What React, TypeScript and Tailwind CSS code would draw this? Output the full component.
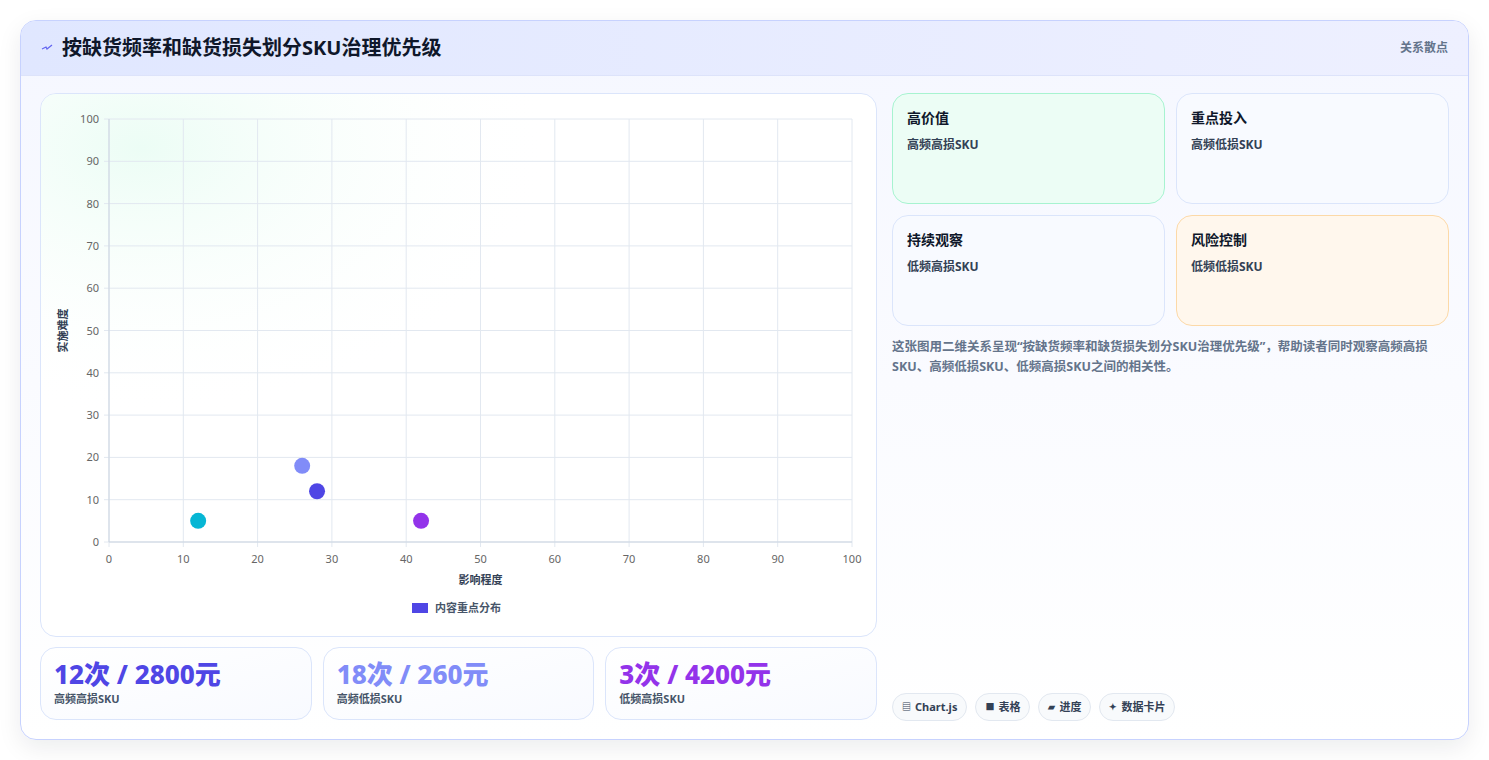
import React from "react";

const F = { fontFamily: '"Noto Sans", "Noto Sans CJK SC", sans-serif' };

function Chart() {
  const W = 836, H = 543;
  const x0 = 68, y0 = 25, pw = 743, ph = 423;
  const X = (v: number) => x0 + (v / 100) * pw;
  const Y = (v: number) => y0 + ph - (v / 100) * ph;
  const ticks = [0, 10, 20, 30, 40, 50, 60, 70, 80, 90, 100];
  const pts = [
    { x: 12, y: 5, c: "#06b6d4" },
    { x: 26, y: 18, c: "#818cf8" },
    { x: 28, y: 12, c: "#4f46e5" },
    { x: 42, y: 5, c: "#9333ea" },
  ];
  return (
    <svg width={W} height={H} className="block" style={F}>
      <defs>
        <radialGradient id="g" cx="0.12" cy="0.1" r="0.5">
          <stop offset="0" stopColor="#ecfdf5" />
          <stop offset="1" stopColor="#ffffff" stopOpacity="0" />
        </radialGradient>
      </defs>
      <rect x={0} y={0} width={W} height={H} fill="url(#g)" />
      {ticks.map((t) => (
        <g key={t}>
          <line x1={X(t)} x2={X(t)} y1={y0} y2={y0 + ph + 5} stroke="#e2e8f0" />
          <line x1={x0 - 5} x2={x0 + pw} y1={Y(t)} y2={Y(t)} stroke="#e2e8f0" />
          <text x={x0 - 10} y={Y(t) + 4} fontSize={11} fill="#666" textAnchor="end">{t}</text>
          <text x={X(t)} y={y0 + ph + 21} fontSize={11} fill="#666" textAnchor="middle">{t}</text>
        </g>
      ))}
      <line x1={x0} x2={x0 + pw} y1={Y(0)} y2={Y(0)} stroke="#cbd5e1" />
      <line x1={x0} x2={x0} y1={y0} y2={y0 + ph} stroke="#cbd5e1" />
      <text x={0} y={0} fontSize={11} fontWeight={700} fill="#334155" textAnchor="middle" transform={`translate(26 ${y0 + ph / 2}) rotate(-90)`}>实施难度</text>
      <text x={x0 + pw / 2} y={490} fontSize={11} fontWeight={700} fill="#334155" textAnchor="middle">影响程度</text>
      <rect x={371} y={509} width={16} height={10} fill="#4f46e5" />
      <text x={394} y={518} fontSize={11} fontWeight={700} fill="#475569">内容重点分布</text>
      {pts.map((p, i) => (
        <circle key={i} cx={X(p.x)} cy={Y(p.y)} r={8} fill={p.c} />
      ))}
    </svg>
  );
}

function Quad({ t, s, cls }: { t: string; s: string; cls: string }) {
  return (
    <div className={`h-[111px] rounded-2xl border px-[14px] py-[13px] ${cls}`}>
      <div className="text-[14px] font-bold text-[#0f172a]">{t}</div>
      <div className="mt-[8px] text-[12px] font-bold text-[#334155]">{s}</div>
    </div>
  );
}

function Stat({ v, c, s }: { v: string; c: string; s: string }) {
  return (
    <div className="flex-1 h-[73px] rounded-2xl border border-[#dbe5fb] bg-gradient-to-br from-white to-[#f8faff] px-[13px] pt-[10px]">
      <div className={`text-[26px] font-extrabold leading-[32px] ${c}`}>{v}</div>
      <div className="text-[11px] font-bold text-[#475569] mt-[1px]">{s}</div>
    </div>
  );
}

function Chip({ i, t }: { i: string; t: string }) {
  return (
    <div className="h-[28px] px-[9px] rounded-full border border-[#e2e8f0] bg-[#f8fafc] flex items-center gap-1 text-[11px] font-bold text-[#334155]">
      <span className="text-[9px]">{i}</span>{t}
    </div>
  );
}

export default function App() {
  return (
    <div className="w-[1489px] h-[760px] bg-white pt-[20px] px-[20px]" style={F}>
      <div className="w-[1449px] h-[720px] rounded-[16px] border border-[#c7d2fe] bg-gradient-to-b from-[#f5f7ff] to-white shadow-[0_8px_24px_rgba(15,23,42,0.08)] overflow-hidden flex flex-col">
        <div className="h-[55px] shrink-0 flex items-center justify-between px-[20px] bg-gradient-to-r from-[#e0e7ff] to-[#eef0ff] border-b border-[#dde3fa]">
          <div className="flex items-center gap-[9px]">
            <svg width="12" height="12" viewBox="0 0 12 12"><path d="M1 7 L5 5 L6 7 L11 3" stroke="#6366f1" strokeWidth="1.3" fill="none" /></svg>
            <span className="text-[20px] font-bold text-[#0f172a]">按缺货频率和缺货损失划分SKU治理优先级</span>
          </div>
          <span className="text-[12px] font-semibold text-[#64748b]">关系散点</span>
        </div>
        <div className="flex-1 flex gap-[15px] px-[19px] pt-[17px] pb-[18px]">
          <div className="w-[837px] flex flex-col gap-[10px]">
            <div className="h-[544px] rounded-2xl border border-[#dbe5fb] bg-white overflow-hidden">
              <Chart />
            </div>
            <div className="flex gap-[11px]">
              <Stat v="12次 / 2800元" c="text-[#4f46e5]" s="高频高损SKU" />
              <Stat v="18次 / 260元" c="text-[#818cf8]" s="高频低损SKU" />
              <Stat v="3次 / 4200元" c="text-[#9333ea]" s="低频高损SKU" />
            </div>
          </div>
          <div className="flex-1 flex flex-col">
            <div className="grid grid-cols-2 gap-[11px]">
              <Quad t="高价值" s="高频高损SKU" cls="border-[#a7f3d0] bg-[#ecfdf5]" />
              <Quad t="重点投入" s="高频低损SKU" cls="border-[#dbe5fb] bg-[#f8faff]" />
              <Quad t="持续观察" s="低频高损SKU" cls="border-[#dbe5fb] bg-[#f8faff]" />
              <Quad t="风险控制" s="低频低损SKU" cls="border-[#fcd9a8] bg-[#fff7ed]" />
            </div>
            <p className="mt-[11px] text-[12.5px] font-bold leading-[20px] text-[#64748b]">
              这张图用二维关系呈现“按缺货频率和缺货损失划分SKU治理优先级”，帮助读者同时观察高频高损SKU、高频低损SKU、低频高损SKU之间的相关性。
            </p>
            <div className="mt-auto flex gap-[8px]">
              <Chip i="▤" t="Chart.js" />
              <Chip i="■" t="表格" />
              <Chip i="▰" t="进度" />
              <Chip i="✦" t="数据卡片" />
            </div>
          </div>
        </div>
      </div>
    </div>
  );
}
